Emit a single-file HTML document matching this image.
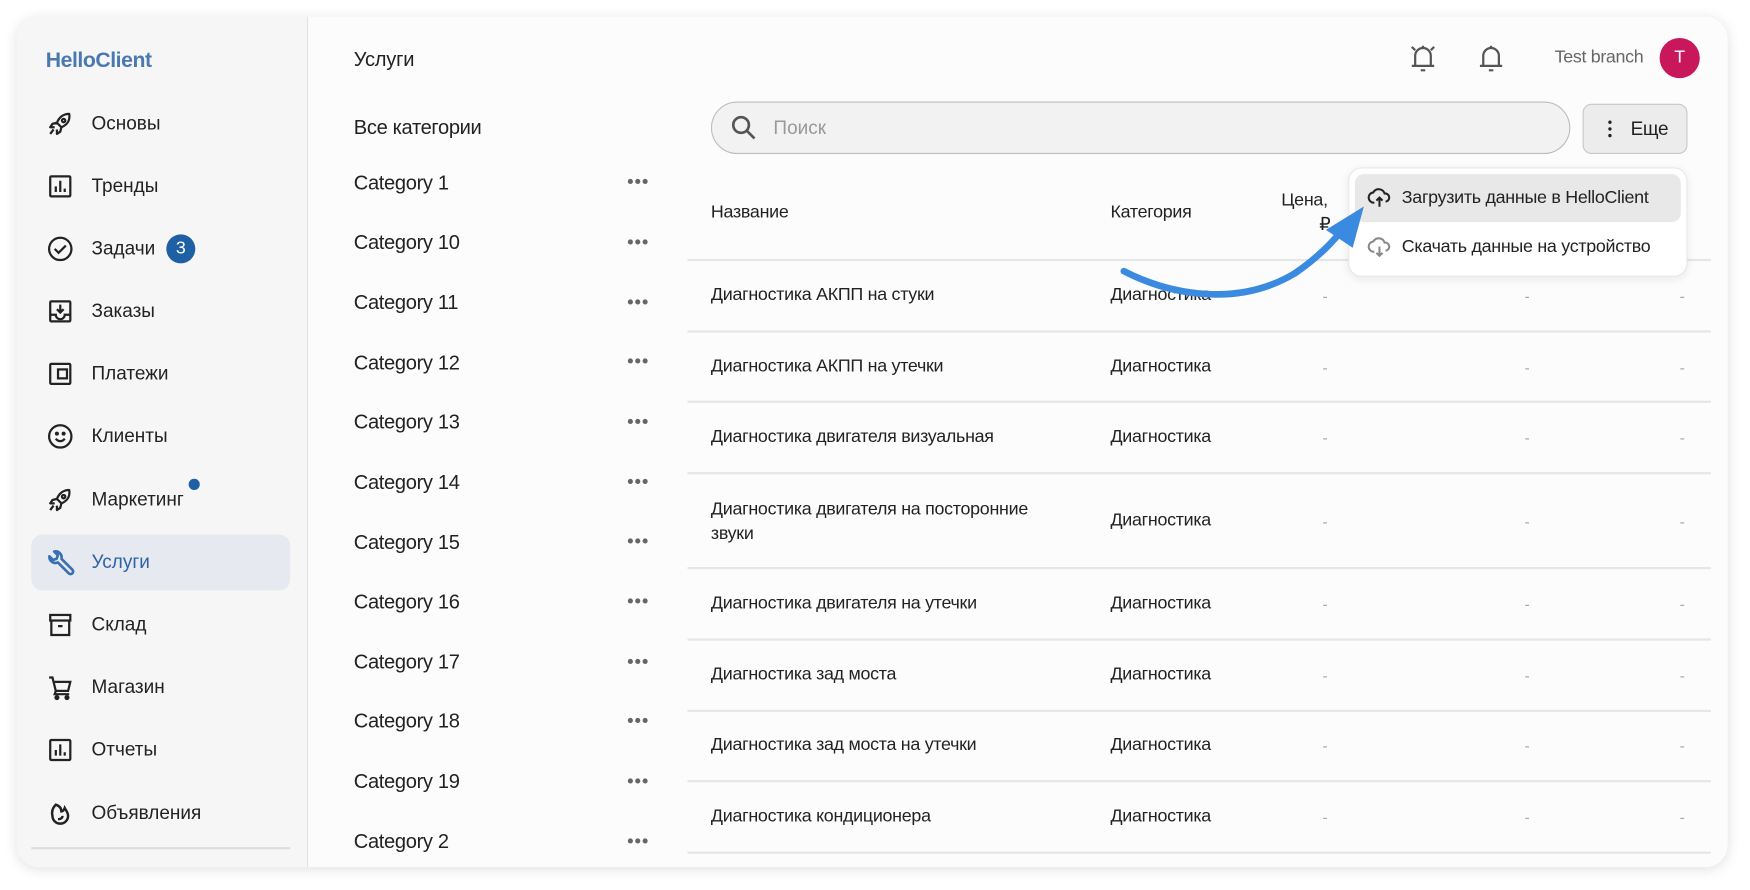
<!DOCTYPE html>
<html><head><meta charset="utf-8"><style>
*{margin:0;padding:0;box-sizing:border-box}
html,body{width:1750px;height:890px;overflow:hidden;background:#fff;font-family:"Liberation Sans",sans-serif;color:#222}
#s{position:absolute;left:0;top:0;width:1568px;height:797px;transform:scale(1.11607);transform-origin:0 0}
.a{position:absolute;white-space:nowrap;line-height:20px}
.card{position:absolute;left:15px;top:15px;width:1533px;height:762px;border-radius:20px;background:#fcfcfc;box-shadow:0 2px 12px rgba(0,0,0,.12);overflow:hidden}
.side{position:absolute;left:0;top:0;width:261px;height:762px;background:#f6f6f6;border-right:1.5px solid #e2e2e2}
.nav{font-size:17px;color:#222}
.cat{font-size:18px;letter-spacing:-.3px;color:#222}
.dots{font-size:16px;color:#666;letter-spacing:1px;font-weight:bold}
.t{font-size:16px;letter-spacing:-.25px;color:#222}
.d{color:#aaa;font-size:14px}
.ln{position:absolute;left:616px;width:917px;height:1.5px;background:#e6e6e6}
svg.i{position:absolute}
</style></head><body><div id="s">
<div class="card"></div>
<div class="side" style="left:15px;top:15px;border-radius:20px 0 0 20px"></div>
<div class="a" style="left:41px;top:45px;font-size:19px;font-weight:bold;color:#4a78b0;letter-spacing:-.4px">HelloClient</div>
<div style="position:absolute;left:28px;top:479px;width:232px;height:50px;border-radius:10px;background:#e6e9ef"></div>
<div style="position:absolute;left:28px;top:759px;width:232px;height:1.5px;background:#ddd"></div>

<svg class="i" style="left:42px;top:99px" width="24" height="24" viewBox="0 0 24 24" fill="none" stroke="#222" stroke-width="2" stroke-linejoin="round"><path d="M20 3c-5 0-9 3-11 8l4 4c5-2 8-6 7-12zM9 11l-4 1-2 3 4 0M13 15l-1 4-3 2 0-4M6 17l-3 4"/><circle cx="15" cy="9" r="1.5"/></svg>
<div class="a nav" style="left:82px;top:101px">Основы</div>
<svg class="i" style="left:42px;top:155px" width="24" height="24" viewBox="0 0 24 24" fill="none" stroke="#222" stroke-width="2"><rect x="3" y="3" width="18" height="18" rx="1"/><path d="M8 17v-5M12 17V7M16 17v-3"/></svg>
<div class="a nav" style="left:82px;top:157px">Тренды</div>
<svg class="i" style="left:42px;top:211px" width="24" height="24" viewBox="0 0 24 24" fill="none" stroke="#222" stroke-width="2"><circle cx="12" cy="12" r="10"/><path d="M7 12l3.5 3.5L17 9"/></svg>
<div class="a nav" style="left:82px;top:213px">Задачи</div>
<div style="position:absolute;left:149px;top:210px;width:26px;height:26px;border-radius:50%;background:#1f5fa3;color:#fff;font-size:16px;text-align:center;line-height:26px">3</div>
<svg class="i" style="left:42px;top:267px" width="24" height="24" viewBox="0 0 24 24" fill="none" stroke="#222" stroke-width="2"><rect x="3" y="3" width="18" height="18" rx="1"/><path d="M3 15h5a4 4 0 008 0h5M12 6v7M9 10l3 3 3-3"/></svg>
<div class="a nav" style="left:82px;top:269px">Заказы</div>
<svg class="i" style="left:42px;top:323px" width="24" height="24" viewBox="0 0 24 24" fill="none" stroke="#222" stroke-width="2"><rect x="3" y="3" width="18" height="18" rx="1"/><rect x="10" y="8" width="8" height="8"/></svg>
<div class="a nav" style="left:82px;top:325px">Платежи</div>
<svg class="i" style="left:42px;top:379px" width="24" height="24" viewBox="0 0 24 24" fill="none" stroke="#222" stroke-width="2"><circle cx="12" cy="12" r="10"/><path d="M8 14c2 3 6 3 8 0"/><circle cx="9" cy="9.5" r=".8" fill="#222"/><circle cx="15" cy="9.5" r=".8" fill="#222"/></svg>
<div class="a nav" style="left:82px;top:381px">Клиенты</div>
<svg class="i" style="left:42px;top:436px" width="24" height="24" viewBox="0 0 24 24" fill="none" stroke="#222" stroke-width="2" stroke-linejoin="round"><path d="M20 3c-5 0-9 3-11 8l4 4c5-2 8-6 7-12zM9 11l-4 1-2 3 4 0M13 15l-1 4-3 2 0-4M6 17l-3 4"/><circle cx="15" cy="9" r="1.5"/></svg>
<div class="a nav" style="left:82px;top:438px">Маркетинг</div>
<div style="position:absolute;left:169px;top:429px;width:10px;height:10px;border-radius:50%;background:#1f5fa3"></div>
<svg class="i" style="left:41px;top:492px" width="26" height="26" viewBox="0 0 24 24" fill="none" stroke="#3a6fb0" stroke-width="2.2" stroke-linejoin="round" stroke-linecap="round"><path d="M3 6l3 3 3-1 1-3-3-3a5 5 0 016 6l9 9a1.8 1.8 0 01-3 3l-9-9A5 5 0 013 6z"/></svg>
<div class="a nav" style="left:82px;top:494px;color:#2e62a6">Услуги</div>
<svg class="i" style="left:42px;top:548px" width="24" height="24" viewBox="0 0 24 24" fill="none" stroke="#222" stroke-width="2"><rect x="3" y="3" width="18" height="5"/><path d="M4 8v13h16V8M10 13h4"/></svg>
<div class="a nav" style="left:82px;top:550px">Склад</div>
<svg class="i" style="left:42px;top:604px" width="24" height="24" viewBox="0 0 24 24" fill="none" stroke="#222" stroke-width="2"><path d="M2 3h3l3 12h11l2-8H7M8 15l-1 3h13"/><circle cx="9" cy="21" r="1.3" fill="#222"/><circle cx="18" cy="21" r="1.3" fill="#222"/></svg>
<div class="a nav" style="left:82px;top:606px">Магазин</div>
<svg class="i" style="left:42px;top:660px" width="24" height="24" viewBox="0 0 24 24" fill="none" stroke="#222" stroke-width="2"><rect x="3" y="3" width="18" height="18" rx="1"/><path d="M8 17v-5M12 17V7M16 17v-3"/></svg>
<div class="a nav" style="left:82px;top:662px">Отчеты</div>
<svg class="i" style="left:42px;top:717px" width="24" height="24" viewBox="0 0 24 24" fill="none" stroke="#222" stroke-width="2.2"><path d="M8 4c-3 3-4 6-3 10a7 7 0 0014 0c0-3-2-5-3-7-1 3-3 3-3 3 0-3-2-5-5-6z"/><path d="M10 17c2 0 4-1 4-3"/></svg>
<div class="a nav" style="left:82px;top:719px">Объявления</div>

<div class="a" style="left:317px;top:43px;font-size:18px;letter-spacing:-.2px">Услуги</div>
<div class="a cat" style="left:317px;top:104px">Все категории</div>
<div class="a cat" style="left:317px;top:154px">Category 1</div><div class="a dots" style="left:562px;top:154px">•••</div>
<div class="a cat" style="left:317px;top:207px">Category 10</div><div class="a dots" style="left:562px;top:208px">•••</div>
<div class="a cat" style="left:317px;top:261px">Category 11</div><div class="a dots" style="left:562px;top:262px">•••</div>
<div class="a cat" style="left:317px;top:315px">Category 12</div><div class="a dots" style="left:562px;top:315px">•••</div>
<div class="a cat" style="left:317px;top:368px">Category 13</div><div class="a dots" style="left:562px;top:369px">•••</div>
<div class="a cat" style="left:317px;top:422px">Category 14</div><div class="a dots" style="left:562px;top:423px">•••</div>
<div class="a cat" style="left:317px;top:476px">Category 15</div><div class="a dots" style="left:562px;top:476px">•••</div>
<div class="a cat" style="left:317px;top:529px">Category 16</div><div class="a dots" style="left:562px;top:530px">•••</div>
<div class="a cat" style="left:317px;top:583px">Category 17</div><div class="a dots" style="left:562px;top:584px">•••</div>
<div class="a cat" style="left:317px;top:636px">Category 18</div><div class="a dots" style="left:562px;top:637px">•••</div>
<div class="a cat" style="left:317px;top:690px">Category 19</div><div class="a dots" style="left:562px;top:691px">•••</div>
<div class="a cat" style="left:317px;top:744px">Category 2</div><div class="a dots" style="left:562px;top:745px">•••</div>

<svg class="i" style="left:1261px;top:37px" width="28" height="30" viewBox="0 0 28 30" fill="none" stroke="#555" stroke-width="2"><path d="M7 22V13a7 7 0 0114 0v9M4 22h20M12 26h4M14 4v2M4 5l3 3M24 5l-3 3"/></svg>
<svg class="i" style="left:1323px;top:37px" width="26" height="30" viewBox="0 0 26 30" fill="none" stroke="#555" stroke-width="2"><path d="M6 22V13a7 7 0 0114 0v9M3 22h20M11 26h4M13 4v2"/></svg>
<div class="a" style="left:1393px;top:42px;font-size:16px;color:#666;letter-spacing:-.3px">Test branch</div>
<div style="position:absolute;left:1487px;top:34px;width:36px;height:36px;border-radius:50%;background:#c8175a;color:#fff;font-size:16px;text-align:center;line-height:36px">T</div>

<div style="position:absolute;left:637px;top:91px;width:770px;height:47px;border-radius:24px;background:#f2f2f2;border:1.5px solid #bdbdbd"></div>
<svg class="i" style="left:654px;top:102px" width="26" height="26" viewBox="0 0 26 26" fill="none" stroke="#555" stroke-width="2.4"><circle cx="10" cy="10" r="7"/><path d="M15 15l7 7"/></svg>
<div class="a" style="left:693px;top:105px;font-size:17px;color:#999">Поиск</div>
<div style="position:absolute;left:1418px;top:93px;width:94px;height:45px;border-radius:8px;background:#ececec;border:1.5px solid #c8c8c8"></div>
<div style="position:absolute;left:1441px;top:108px;width:3px;height:3px;background:#222;border-radius:50%;box-shadow:0 6px 0 #222,0 12px 0 #222"></div>
<div class="a" style="left:1461px;top:106px;font-size:17px;letter-spacing:-.3px">Еще</div>

<div class="a t" style="left:637px;top:181px">Название</div>
<div class="a t" style="left:995px;top:181px">Категория</div>
<div class="a t" style="left:1148px;top:170px">Цена,</div>
<div class="a t" style="left:1182px;top:192px">₽</div>
<div class="ln" style="top:232px"></div>
<div class="ln" style="top:296px"></div>
<div class="ln" style="top:359px"></div>
<div class="ln" style="top:423px"></div>
<div class="ln" style="top:508px"></div>
<div class="ln" style="top:572px"></div>
<div class="ln" style="top:636px"></div>
<div class="ln" style="top:699px"></div>
<div class="ln" style="top:763px"></div>

<div class="a t" style="left:637px;top:255px">Диагностика АКПП на стуки</div><div class="a t" style="left:995px;top:255px">Диагностика</div>
<div class="a t" style="left:637px;top:319px">Диагностика АКПП на утечки</div><div class="a t" style="left:995px;top:319px">Диагностика</div>
<div class="a t" style="left:637px;top:382px">Диагностика двигателя визуальная</div><div class="a t" style="left:995px;top:382px">Диагностика</div>
<div class="a t" style="left:637px;top:446px;line-height:22px">Диагностика двигателя на посторонние<br>звуки</div><div class="a t" style="left:995px;top:457px">Диагностика</div>
<div class="a t" style="left:637px;top:531px">Диагностика двигателя на утечки</div><div class="a t" style="left:995px;top:531px">Диагностика</div>
<div class="a t" style="left:637px;top:595px">Диагностика зад моста</div><div class="a t" style="left:995px;top:595px">Диагностика</div>
<div class="a t" style="left:637px;top:658px">Диагностика зад моста на утечки</div><div class="a t" style="left:995px;top:658px">Диагностика</div>
<div class="a t" style="left:637px;top:722px">Диагностика кондиционера</div><div class="a t" style="left:995px;top:722px">Диагностика</div>

<div class="a d" style="left:1185px;top:255px">-</div><div class="a d" style="left:1366px;top:255px">-</div><div class="a d" style="left:1505px;top:255px">-</div>
<div class="a d" style="left:1185px;top:319px">-</div><div class="a d" style="left:1366px;top:319px">-</div><div class="a d" style="left:1505px;top:319px">-</div>
<div class="a d" style="left:1185px;top:382px">-</div><div class="a d" style="left:1366px;top:382px">-</div><div class="a d" style="left:1505px;top:382px">-</div>
<div class="a d" style="left:1185px;top:457px">-</div><div class="a d" style="left:1366px;top:457px">-</div><div class="a d" style="left:1505px;top:457px">-</div>
<div class="a d" style="left:1185px;top:531px">-</div><div class="a d" style="left:1366px;top:531px">-</div><div class="a d" style="left:1505px;top:531px">-</div>
<div class="a d" style="left:1185px;top:595px">-</div><div class="a d" style="left:1366px;top:595px">-</div><div class="a d" style="left:1505px;top:595px">-</div>
<div class="a d" style="left:1185px;top:658px">-</div><div class="a d" style="left:1366px;top:658px">-</div><div class="a d" style="left:1505px;top:658px">-</div>
<div class="a d" style="left:1185px;top:722px">-</div><div class="a d" style="left:1366px;top:722px">-</div><div class="a d" style="left:1505px;top:722px">-</div>

<div style="position:absolute;left:1208px;top:150px;width:304px;height:98px;border-radius:12px;background:#fff;border:1px solid #e8e8e8;box-shadow:0 2px 8px rgba(0,0,0,.08)"></div>
<div style="position:absolute;left:1214px;top:156px;width:292px;height:43px;border-radius:8px;background:#e8e8e8"></div>
<svg class="i" style="left:1225px;top:166px" width="22" height="22" viewBox="0 0 24 24" fill="none" stroke="#222" stroke-width="2"><path d="M7 17a5 5 0 01-1-10 6 6 0 0111 1 4 4 0 011 8M12 21v-9M9 15l3-3 3 3"/></svg>
<div class="a t" style="left:1256px;top:168px">Загрузить данные в HelloClient</div>
<svg class="i" style="left:1225px;top:210px" width="22" height="22" viewBox="0 0 24 24" fill="none" stroke="#888" stroke-width="2"><path d="M7 17a5 5 0 01-1-10 6 6 0 0111 1 4 4 0 011 8M12 12v9M9 18l3 3 3-3"/></svg>
<div class="a t" style="left:1256px;top:212px">Скачать данные на устройство</div>

<svg class="i" style="left:0;top:0" width="1568" height="797" viewBox="0 0 1568 797"><path d="M1007 243C1050 265 1110 275 1160 245C1185 228 1198 212 1208 200" fill="none" stroke="#3a8ae0" stroke-width="6" stroke-linecap="round"/><path d="M1222 185L1188 206L1212 222Z" fill="#3a8ae0"/></svg>
</div></body></html>
